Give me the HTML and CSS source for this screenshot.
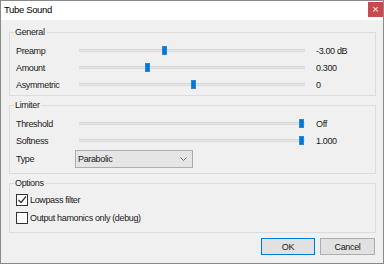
FILE: index.html
```html
<!DOCTYPE html>
<html>
<head>
<meta charset="utf-8">
<link rel="stylesheet" href="styles.css">
</head>
<body>
<div class="window">
  <div class="titlebar">
    <span class="title">Tube Sound</span>
    <span class="close">×</span>
  </div>
  <div class="client">
    <fieldset class="group general">
      <legend>General</legend>
      <div class="row">
        <span class="label">Preamp</span>
        <div class="track"><span class="thumb" style="left:83px"></span></div>
        <span class="value">-3.00 dB</span>
      </div>
      <div class="row">
        <span class="label">Amount</span>
        <div class="track"><span class="thumb" style="left:66px"></span></div>
        <span class="value">0.300</span>
      </div>
      <div class="row">
        <span class="label">Asymmetric</span>
        <div class="track"><span class="thumb" style="left:112px"></span></div>
        <span class="value">0</span>
      </div>
    </fieldset>
    <fieldset class="group limiter">
      <legend>Limiter</legend>
      <div class="row">
        <span class="label">Threshold</span>
        <div class="track"><span class="thumb" style="left:220px"></span></div>
        <span class="value">Off</span>
      </div>
      <div class="row">
        <span class="label">Softness</span>
        <div class="track"><span class="thumb" style="left:220px"></span></div>
        <span class="value">1.000</span>
      </div>
      <div class="row type-row">
        <span class="label short">Type</span>
        <div class="combo">
          <span class="combo-text">Parabolic</span>
          <svg class="chevron" width="7" height="4" viewBox="0 0 7 4"><path d="M0.5 0.5 L3.5 3.5 L6.5 0.5" fill="none" stroke="#6d6d6d" stroke-width="1"/></svg>
        </div>
      </div>
    </fieldset>
    <fieldset class="group options">
      <legend>Options</legend>
      <div class="check-row">
        <span class="box"><svg width="10" height="10" viewBox="0 0 10 10"><path d="M1.5 5 L4 7.5 L9 1.5" fill="none" stroke="#333" stroke-width="1.2"/></svg></span>
        <span class="check-label">Lowpass filter</span>
      </div>
      <div class="check-row">
        <span class="box"></span>
        <span class="check-label">Output hamonics only (debug)</span>
      </div>
    </fieldset>
    <div class="buttons">
      <button class="btn default">OK</button>
      <button class="btn cancel">Cancel</button>
    </div>
  </div>
</div>
</body>
</html>
```
FILE: styles.css
```css
* { box-sizing: border-box; }
html, body { margin: 0; padding: 0; }
body {
  font-family: "Liberation Sans", Arial, sans-serif;
  font-size: 9px;
  letter-spacing: -0.35px;
  color: #1a1a1a;
}
.window {
  width: 384px;
  height: 264px;
  border: 1px solid #8a8a8a;
  display: flex;
  flex-direction: column;
  background: #f0f0f0;
}
.titlebar {
  height: 19px;
  background: #fff;
  display: flex;
  align-items: center;
  justify-content: space-between;
  padding-left: 3px;
}
.title {
  font-size: 9.5px;
  line-height: 12px;
  color: #000;
  margin-top: -1px;
}
.close {
  width: 15px;
  height: 15px;
  margin-top: -3px;
  background: #c84a4e;
  color: #fff;
  font-family: "DejaVu Sans", sans-serif;
  font-size: 9px;
  letter-spacing: 0;
  line-height: 15px;
  text-align: center;
}
.client {
  flex: 1;
  padding: 6px 7px 0 8px;
  display: flex;
  flex-direction: column;
}
.group {
  margin: 0;
  border: 1px solid #dcdcdc;
  padding: 4px 6px 2px 6px;
  min-width: 0;
}
.group legend {
  line-height: 12px;
  padding: 0 1px;
  margin-left: -2px;
}
.limiter { margin-top: 3px; padding-bottom: 4px; }
.options { margin-top: 3px; padding-top: 2px; padding-bottom: 5px; }
.row {
  height: 17px;
  display: flex;
  align-items: center;
}
.label {
  width: 63px;
  flex: none;
  line-height: 12px;
}
.label.short { width: 59px; }
.track {
  width: 226px;
  height: 3px;
  flex: none;
  background: #e7e7e7;
  border-top: 1px solid #d6d6d6;
  border-bottom: 1px solid #dadada;
  position: relative;
}
.thumb {
  position: absolute;
  top: -4px;
  width: 5px;
  height: 9px;
  background: #0078d7;
  border: 1px solid #2a86d6;
}
.value {
  margin-left: 11px;
  line-height: 12px;
}
.type-row { height: 20px; }
.combo {
  width: 118px;
  height: 18px;
  border: 1px solid #adadad;
  background: #e5e5e5;
  display: flex;
  align-items: center;
  justify-content: space-between;
  padding: 0 5px 0 2px;
}
.combo-text { line-height: 12px; }
.chevron { display: block; }
.check-row {
  height: 18px;
  display: flex;
  align-items: center;
}
.box {
  width: 12px;
  height: 12px;
  border: 1px solid #333;
  background: #fff;
  display: flex;
  align-items: center;
  justify-content: center;
  flex: none;
}
.box svg { display: block; }
.check-label {
  margin-left: 2px;
  line-height: 12px;
}
.buttons {
  display: flex;
  justify-content: flex-end;
  gap: 5px;
  margin-top: 5px;
  padding-right: 1px;
}
.btn {
  font-family: inherit;
  font-size: 9px;
  letter-spacing: -0.35px;
  color: #1a1a1a;
  height: 17px;
  padding: 0;
  background: #e1e1e1;
  border: 1px solid #adadad;
  line-height: 12px;
}
.btn.default { width: 54px; border-color: #0078d7; }
.btn.cancel { width: 55px; }
```
